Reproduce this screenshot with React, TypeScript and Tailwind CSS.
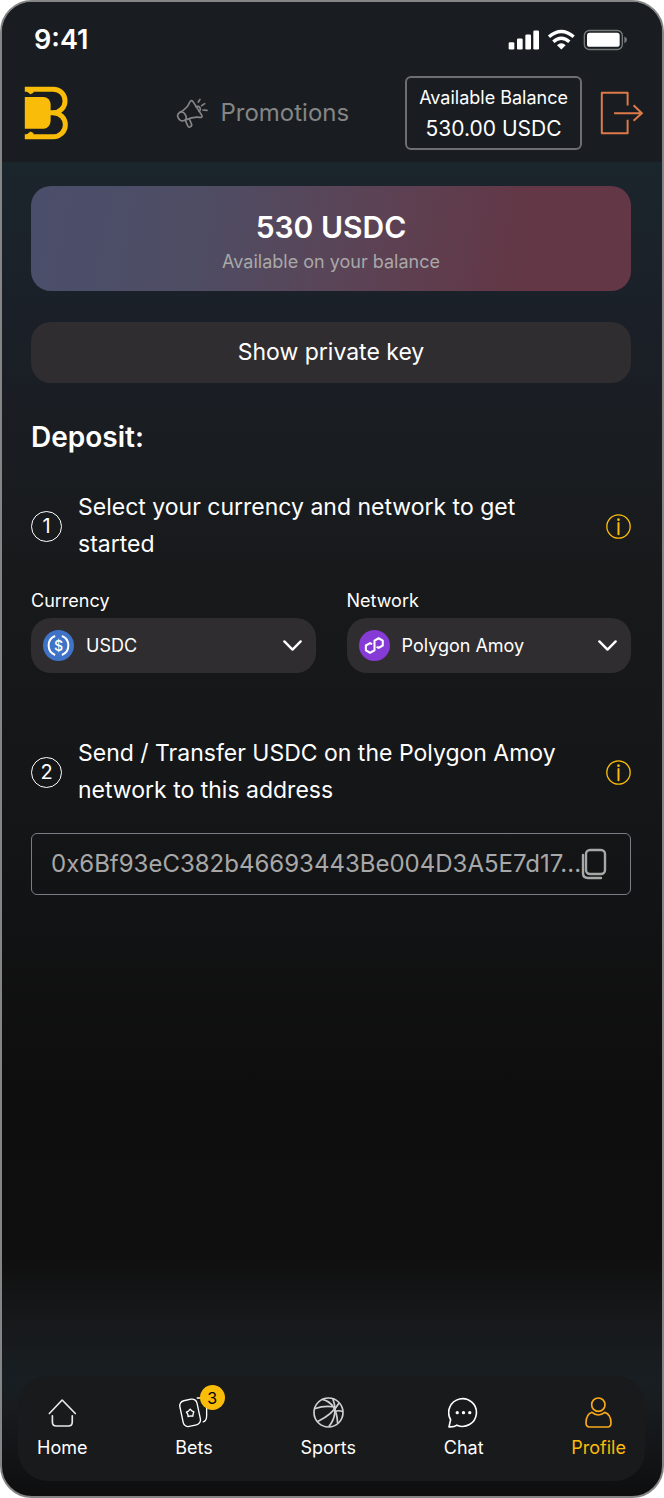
import React from "react";

interface IconProps {
  className?: string;
}

function Logo({ className }: IconProps) {
  return (
    <svg viewBox="0 0 132 163" className={className} aria-label="Home page" role="img">
      <g stroke="#f9bc09" strokeWidth="15" fill="none">
        <path d="M2 9.500 H88 A35.500 35.500 0 0 1 88 80.500 H76" />
        <path d="M88 80.500 A36.500 36.500 0 0 1 88 153.500 H2" />
      </g>
      <g fill="#f9bc09">
        <path d="M2 33 H60 Q78 35 80 56 V106 Q78 127 60 129 H2 Z" />
        <path d="M2 12 H28 V20 L19 25 Z" />
        <path d="M2 151 H28 V142 L19 137 Z" />
      </g>
    </svg>
  );
}

function Megaphone({ className }: IconProps) {
  return (
    <svg viewBox="538 294 96 93" className={className} fill="none" stroke="currentColor" strokeWidth="5" strokeLinecap="round" strokeLinejoin="round">
      <path d="M550 337 Q572 326 579 307 Q583 298 589 305 L616 347 Q617 354 609 352 Q590 349 567 360" />
      <path d="M550 337 Q540 343 544 352 Q550 367 564 361 Q572 357 567 346 Q561 333 550 337" />
      <path d="M566 361 L573 377 Q576 384 582 380 Q587 376 584 371 L578 357" />
      <path d="M598 320 Q611 316 611 329 Q610 334 607 334" />
      <path d="M605 306 L610 298 M615 317 L624 311 M619 330 L631 331" />
    </svg>
  );
}

function StatusIcons() {
  return (
    <svg viewBox="527 83 360 65" className="h-[22px] w-[120px]" aria-hidden="true">
      <g fill="#fff">
        <rect x="529" y="122" width="17" height="22" rx="4" />
        <rect x="554" y="111" width="17" height="33" rx="4" />
        <rect x="579" y="99" width="17" height="45" rx="4" />
        <rect x="603" y="87" width="17" height="57" rx="4" />
        <path d="M687 144 L674 131 Q687 120 700 131 Z" />
        <rect x="764" y="94" width="98" height="42" rx="8" />
      </g>
      <g fill="none" stroke="#fff" strokeWidth="10">
        <path d="M650 106 Q687 74 724 106" />
        <path d="M663 121 Q687 100 711 121" />
      </g>
      <rect x="756" y="87" width="114" height="57" rx="15" fill="none" stroke="#77787a" strokeWidth="4" />
      <path d="M876 105 Q884 108 884 115 Q884 122 876 125 Z" fill="#77787a" />
    </svg>
  );
}

function LogoutIcon({ className }: IconProps) {
  return (
    <svg viewBox="805 274 132 133" className={className} fill="none" stroke="#de7a49" strokeWidth="6">
      <path d="M888 318 V279 H810 V402 H888 V361" strokeLinejoin="round" />
      <path d="M847 341 H931 M906 317 L931 341 L906 364" />
    </svg>
  );
}

function UsdcIcon({ className }: IconProps) {
  return (
    <svg viewBox="0 0 92 92" className={className}>
      <circle cx="46" cy="46" r="46" fill="#3f73c8" />
      <g fill="none" stroke="#fff" strokeWidth="6">
        <path d="M36 18 A30 30 0 0 0 36 74" />
        <path d="M56 18 A30 30 0 0 1 56 74" />
      </g>
      <text x="46" y="61" textAnchor="middle" fontSize="42" fontFamily="Inter, sans-serif" fontWeight="500" fill="#fff">
        $
      </text>
    </svg>
  );
}

function PolygonIcon({ className }: IconProps) {
  return (
    <svg viewBox="82 453 90 90" className={className}>
      <circle cx="127" cy="498" r="45" fill="#873bd6" />
      <path
        d="M120 494 L114 491 L102 498 V512 L114 519 L127 512 V484 L139 477 L151 484 V498 L139 505 L133 502"
        fill="none"
        stroke="#fff"
        strokeWidth="6"
        strokeLinejoin="round"
      />
    </svg>
  );
}

function Chevron({ className }: IconProps) {
  return (
    <svg viewBox="850 483 56 32" className={className} fill="none" stroke="#fff" strokeWidth="7" strokeLinecap="round" strokeLinejoin="round">
      <path d="M854 487 L878 511 L902 487" />
    </svg>
  );
}

function InfoIcon({ className }: IconProps) {
  return (
    <svg viewBox="0 0 75 75" className={className} fill="none" stroke="#f9bc09">
      <circle cx="37.500" cy="37.500" r="35" strokeWidth="4" />
      <path d="M37.500 27 V61" strokeWidth="6" strokeLinecap="round" />
      <circle cx="37.500" cy="17" r="4" fill="#f9bc09" stroke="none" />
    </svg>
  );
}

function CopyIcon({ className }: IconProps) {
  return (
    <svg viewBox="0 0 26 32" className={className} fill="none" stroke="#a8a8a8" strokeWidth="2.400" strokeLinecap="round">
      <rect x="5" y="2" width="19" height="24" rx="4" />
      <path d="M2 7 V25 Q2 30 7 30 H20" />
    </svg>
  );
}

function HomeIcon({ className }: IconProps) {
  return (
    <svg viewBox="142 112 92 92" className={className} fill="none" stroke="#e8e8e8" strokeWidth="5" strokeLinecap="round" strokeLinejoin="round">
      <path d="M149 161 L187 121 L226 161" />
      <path d="M158 168 V186 Q158 198 170 198 H205 Q217 198 217 186 V168" />
    </svg>
  );
}

function BetsIcon({ className }: IconProps) {
  return (
    <svg viewBox="539 112 92 92" className={className} fill="none" stroke="#fff" strokeWidth="4" strokeLinecap="round" strokeLinejoin="round">
      <rect x="549" y="120" width="52" height="78" rx="15" transform="rotate(-12 575 159)" />
      <path d="M596 115 H608 Q624 117 624 132 V168 Q624 184 614 186" />
      <path d="M575 148 L580 153 L586 156 L584 162 L583 169 L576 168 L569 170 L568 163 L564 157 L570 154 Z" />
    </svg>
  );
}

function SportsIcon({ className }: IconProps) {
  return (
    <svg viewBox="218 113 92 92" className={className} fill="none" stroke="#d0d0d0" strokeWidth="5">
      <circle cx="264" cy="159" r="43" />
      <path d="M232 186 Q276 164 296 130" />
      <path d="M222 148 Q252 138 276 142" />
      <path d="M265 201 Q294 165 277 119" />
      <path d="M246 120 Q288 130 291 190" />
      <path d="M281 157 Q294 151 306 156" />
    </svg>
  );
}

function ChatIcon({ className }: IconProps) {
  return (
    <svg viewBox="54 112 94 93" className={className} fill="none" stroke="#fff" strokeWidth="5" strokeLinejoin="round">
      <path d="M57 202 L62 180 A42 42 0 1 1 81 197 Q73 203 57 202 Z" />
      <g fill="#fff" stroke="none">
        <circle cx="82" cy="159" r="5" />
        <circle cx="101" cy="159" r="5" />
        <circle cx="120" cy="159" r="5" />
      </g>
    </svg>
  );
}

function ProfileIcon({ className }: IconProps) {
  return (
    <svg viewBox="456 112 93 93" className={className} fill="none" stroke="#f9a91b" strokeWidth="5" strokeLinejoin="round">
      <circle cx="502" cy="135" r="20" />
      <path d="M483 158 Q502 174 521 158 Q540 164 540 190 Q540 202 530 202 H476 Q465 202 465 190 Q465 164 483 158 Z" />
    </svg>
  );
}

interface StepProps {
  number: number;
  children: React.ReactNode;
}

function Step({ number, children }: StepProps) {
  return (
    <div className="flex items-center">
      <span className="mr-4 flex size-[31px] shrink-0 items-center justify-center rounded-full border border-white text-xl">
        {number}
      </span>
      <p className="flex-1 pr-8 text-[23px] leading-[37px]">{children}</p>
      <button type="button" aria-label={`More about step ${number}`}>
        <InfoIcon className="size-[25px]" />
      </button>
    </div>
  );
}

interface SelectFieldProps {
  id: string;
  label: string;
  value: string;
  icon: React.ReactNode;
}

function SelectField({ id, label, value, icon }: SelectFieldProps) {
  return (
    <div>
      <label htmlFor={id} className="block text-lg leading-6">
        {label}
      </label>
      <div className="mt-[5px] flex h-[55px] items-center rounded-[20px] bg-[#302d30] px-3">
        {icon}
        <select id={id} className="ml-3 h-full min-w-0 flex-1 appearance-none bg-transparent text-lg text-white outline-none">
          <option>{value}</option>
        </select>
        <Chevron className="mr-0.5 h-[11px] w-[19px]" />
      </div>
    </div>
  );
}

const navItems = [
  { label: "Home", Icon: HomeIcon },
  { label: "Bets", Icon: BetsIcon, badge: 3 },
  { label: "Sports", Icon: SportsIcon },
  { label: "Chat", Icon: ChatIcon },
  { label: "Profile", Icon: ProfileIcon, active: true },
];

export default function App() {
  return (
    <div className="bg-white">
      <div className="flex min-h-screen flex-col overflow-hidden rounded-[32px] border-2 border-[#858585] bg-[linear-gradient(#1b252c_11%,#1b2028_21%,#191c1f_33%,#18191b_38%,#151618_53%,#0e0e0e_73%,#0f0f0f_84%,#17181a_88%,#181e22_92%,#181c1f_94%,#0e0e0f_100%)] font-['Inter',sans-serif] text-white">
        {/* Status bar + header */}
        <header className="bg-[#191d21] pb-3">
          <div className="flex items-center justify-between pt-5 pr-[34px] pl-8">
            <time className="text-[27px] leading-9 font-semibold">9:41</time>
            <StatusIcons />
          </div>
          <div className="mt-[18px] flex items-center pr-[18px] pl-[22px]">
            <a href="#">
              <Logo className="h-[54px] w-11" />
            </a>
            <a href="#promotions" className="mr-14 ml-auto flex items-center gap-3 text-2xl leading-8 text-[#858585]">
              <Megaphone className="h-[31px] w-8" />
              Promotions
            </a>
            <div className="rounded-md border-2 border-[#6d6d73] px-3 py-1 text-center">
              <div className="text-lg leading-[31px]">Available Balance</div>
              <div className="text-[21px] leading-[31px]">530.00 USDC</div>
            </div>
            <button type="button" aria-label="Log out" className="ml-[18px]">
              <LogoutIcon className="size-11" />
            </button>
          </div>
        </header>

        <main className="pt-6 pr-[31px] pl-[29px]">
          <section className="rounded-[20px] bg-[linear-gradient(100deg,#4b4e6b_0%,#4e4d64_28%,#5a4457_52%,#633745_82%,#633745_100%)] pt-5 pb-4 text-center">
            <h1 className="text-3xl leading-[42px] font-semibold">530 USDC</h1>
            <p className="text-lg leading-[27px] text-[#a8a8a8]">Available on your balance</p>
          </section>

          <button type="button" className="mt-[31px] h-[61px] w-full rounded-[20px] bg-[#302d30] text-[23px]">
            Show private key
          </button>

          <h2 className="mt-9 mb-[34px] text-[28px] leading-9 font-semibold">Deposit:</h2>

          <Step number={1}>Select your currency and network to get started</Step>

          <div className="mt-[26px] grid grid-cols-2 gap-[31px]">
            <SelectField id="currency" label="Currency" value="USDC" icon={<UsdcIcon className="size-[31px]" />} />
            <SelectField id="network" label="Network" value="Polygon Amoy" icon={<PolygonIcon className="size-[31px]" />} />
          </div>

          <div className="mt-[62px]">
            <Step number={2}>Send / Transfer USDC on the Polygon Amoy network to this address</Step>
          </div>

          <div className="mt-6 flex h-[62px] items-center rounded-md border border-[#7c7c84] pr-[23px] pl-[19px]">
            <input
              type="text"
              readOnly
              aria-label="Deposit address"
              value="0x6Bf93eC382b46693443Be004D3A5E7d17..."
              className="min-w-0 flex-1 bg-transparent text-2xl text-[#a8a8a8] outline-none"
            />
            <button type="button" aria-label="Copy address">
              <CopyIcon className="h-8 w-[26px]" />
            </button>
          </div>
        </main>

        {/* Bottom navigation */}
        <nav className="mt-auto mr-[17px] mb-[15px] ml-4 flex h-[105px] items-start justify-between rounded-[30px] bg-[#191a1c] px-[19px] pt-[21px]">
          {navItems.map(({ label, Icon, badge, active }) => (
            <a
              key={label}
              href={`#${label.toLowerCase()}`}
              aria-current={active ? "page" : undefined}
              className={`relative flex flex-col items-center gap-1.5 text-lg leading-7 ${active ? "text-[#f9bc09]" : "text-white"}`}
            >
              <Icon className="size-[31px]" />
              {label}
              {badge && (
                <span className="absolute -top-3 -right-3 flex size-[25px] items-center justify-center rounded-full bg-[#f9bc09] text-base text-black">
                  {badge}
                </span>
              )}
            </a>
          ))}
        </nav>
      </div>
    </div>
  );
}
